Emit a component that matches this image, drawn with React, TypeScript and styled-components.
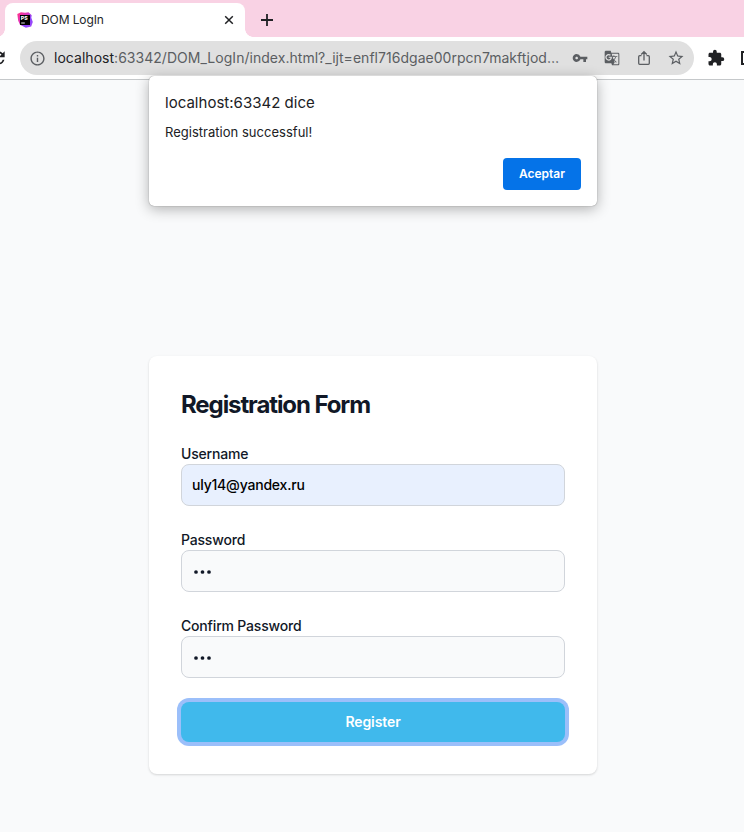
import React from "react";
import styled, { createGlobalStyle } from "styled-components";
import { MdExtension, MdGTranslate, MdInfoOutline, MdRefresh, MdStarBorder, MdVpnKey } from "react-icons/md";

const GlobalStyle = createGlobalStyle`
  * { box-sizing: border-box; }
  body { margin: 0; font-family: Inter, "Liberation Sans", sans-serif; -webkit-font-smoothing: antialiased; }
  button, input { font-family: inherit; }
`;

const Window = styled.div`
  position: relative;
  width: 744px;
  height: 832px;
  display: flex;
  flex-direction: column;
  overflow: hidden;
  background: #f9fafb;
`;

const TabStrip = styled.div`
  flex: none;
  height: 37px;
  padding: 3px 0 0 5px;
  display: flex;
  background: #f9d2e4;
`;

const Tab = styled.div`
  position: relative;
  width: 240px;
  height: 34px;
  padding: 0 10px 0 12px;
  display: flex;
  align-items: center;
  background: #fff;
  border-radius: 8px 8px 0 0;
  &::before, &::after {
    content: "";
    position: absolute;
    bottom: 0;
    width: 8px;
    height: 8px;
  }
  &::before { left: -8px; background: radial-gradient(circle at 0 0, transparent 7.5px, #fff 8px); }
  &::after { right: -8px; background: radial-gradient(circle at 100% 0, transparent 7.5px, #fff 8px); }
`;

const TabTitle = styled.span`
  flex: 1;
  margin-left: 8px;
  font-size: 12px;
  line-height: 16px;
  letter-spacing: -0.1px;
  color: #24262a;
`;

const Glyph = styled.svg`
  display: block;
  flex: none;
  overflow: visible;
`;

const NewTab = styled.div`
  margin-left: 15px;
  display: flex;
  align-items: center;
`;

const Toolbar = styled.div`
  flex: none;
  height: 43px;
  padding-top: 4px;
  display: flex;
  align-items: flex-start;
  background: #fff;
  border-bottom: 1px solid #c5c8ca;
`;

const ToolSlot = styled.div<{ $width: number; $shift?: number }>`
  flex: none;
  width: ${(p) => p.$width}px;
  height: 34px;
  margin-left: ${(p) => p.$shift ?? 0}px;
  display: flex;
  align-items: center;
  justify-content: center;
  color: #202124;
`;

const AddressBar = styled.div`
  flex: none;
  width: 674px;
  height: 34px;
  padding: 0 2px 0 9px;
  display: flex;
  align-items: center;
  border-radius: 17px;
  background: #e0e0e0;
  color: #5b5e62;
`;

const Url = styled.div`
  flex: 1;
  min-width: 0;
  margin-left: 8px;
  white-space: nowrap;
  font-size: 14px;
  line-height: 20px;
  letter-spacing: 0.03px;
  color: #5b5e62;
  b { font-weight: 400; color: #202124; }
`;

const AddressAction = styled.div`
  flex: none;
  width: 32px;
  display: flex;
  justify-content: center;
`;

const Page = styled.main`
  flex: 1;
  padding: 276px 0 0 149px;
`;

const Card = styled.form`
  width: 448px;
  height: 418px;
  padding: 32px;
  display: flex;
  flex-direction: column;
  gap: 24px;
  border-radius: 8px;
  background: #fff;
  box-shadow: 0 1px 3px rgba(0, 0, 0, 0.1), 0 1px 2px rgba(0, 0, 0, 0.06);
`;

const Heading = styled.h1`
  margin: 0;
  font-size: 24px;
  line-height: 33px;
  height: 32px;
  font-weight: 700;
  letter-spacing: -1.1px;
  color: #111827;
`;

const Field = styled.label`
  display: block;
  font-size: 14px;
  line-height: 20px;
  font-weight: 500;
  letter-spacing: -0.18px;
  color: #111827;
`;

const Input = styled.input<{ $filled?: boolean }>`
  display: block;
  width: 100%;
  height: 42px;
  padding: 0 10px 2px;
  border: 1px solid #d1d5db;
  border-radius: 8px;
  outline: none;
  background: ${(p) => (p.$filled ? "#e8f0fe" : "#f9fafb")};
  font-size: 14px;
  font-weight: ${(p) => (p.$filled ? 500 : 400)};
  letter-spacing: -0.2px;
  color: ${(p) => (p.$filled ? "#000" : "#111827")};
`;

const PasswordBox = styled.div`
  height: 42px;
  padding: 2px 0 0 11px;
  display: flex;
  align-items: center;
  border: 1px solid #d1d5db;
  border-radius: 8px;
  background: #f9fafb;
`;

const Register = styled.button`
  height: 40px;
  padding: 0 0 2px;
  border: 0;
  border-radius: 8px;
  background: #40b9ec;
  box-shadow: 0 0 0 4px #9bbffa;
  font-size: 14px;
  font-weight: 600;
  letter-spacing: -0.1px;
  color: #fff;
`;

const Dialog = styled.section`
  position: absolute;
  left: 149px;
  top: 76px;
  width: 448px;
  height: 130px;
  padding: 16px;
  display: flex;
  flex-direction: column;
  border-radius: 5px;
  background: #fff;
  box-shadow: 0 0 1px rgba(0, 0, 0, 0.55), 0 3px 14px rgba(0, 0, 0, 0.3);
`;

const Origin = styled.h2`
  margin: 0;
  font-size: 15px;
  line-height: 22px;
  font-weight: 400;
  letter-spacing: 0.02px;
  color: #202124;
`;

const Message = styled.p`
  margin: 8px 0 0;
  font-size: 13px;
  line-height: 20px;
  letter-spacing: 0.02px;
  color: #202124;
`;

const Accept = styled.button`
  align-self: flex-end;
  margin-top: auto;
  width: 78px;
  height: 32px;
  padding: 0 0 2px;
  border: 0;
  border-radius: 4px;
  background: #0573e8;
  font-size: 12px;
  font-weight: 600;
  color: #fff;
`;

const Favicon = () => (
  <Glyph width="16" height="16" viewBox="0 0 16 16">
    <defs>
      <linearGradient id="ps" x1="0" y1="0.1" x2="1" y2="0.9">
        <stop offset="0" stopColor="#ff318c" />
        <stop offset="0.4" stopColor="#d936bd" />
        <stop offset="0.65" stopColor="#8a45fb" />
        <stop offset="1" stopColor="#a44bfa" />
      </linearGradient>
    </defs>
    <path d="M.3 2 4 .3l4 .5 3.5-.5 3.2 3-.4 2.5 1.5 4.3-1.6 4.5-5.3 1.2L3 12.7l-1.8-4z" fill="url(#ps)" />
    <path d="M3 3h10v10H3z" fill="#000" />
    <path d="M4.2 11h3.6" stroke="#fff" strokeWidth=".9" />
    <text x="3.8" y="7.9" fill="#fff" fontFamily="Inter, sans-serif" fontWeight="800" fontSize="5.3">PS</text>
  </Glyph>
);

const ShareIcon = () => (
  <Glyph width="14" height="16" viewBox="0 0 14 16" fill="none" stroke="currentColor" strokeWidth="1.3">
    <path d="M4.5 5.7H2.7a1 1 0 0 0-1 1v6.6a1 1 0 0 0 1 1h8.6a1 1 0 0 0 1-1V6.7a1 1 0 0 0-1-1H9.5M7 10.5V1.9M4.2 4.5 7 1.7l2.8 2.8" />
  </Glyph>
);

const MaskedValue = () => (
  <Glyph width="20" height="6" viewBox="0 0 20 6" fill="#111827">
    <circle cx="3" cy="3" r="1.85" />
    <circle cx="9.5" cy="3" r="1.85" />
    <circle cx="16" cy="3" r="1.85" />
  </Glyph>
);

export default function App() {
  return (
    <Window>
      <GlobalStyle />
      <TabStrip>
        <Tab>
          <Favicon />
          <TabTitle>DOM LogIn</TabTitle>
          <Glyph width="12" height="12" viewBox="0 0 12 12" stroke="#202124" strokeWidth="1.5">
            <path d="m2.2 2.2 7.6 7.6m0-7.6L2.2 9.8" />
          </Glyph>
        </Tab>
        <NewTab>
          <Glyph width="14" height="14" viewBox="0 0 14 14" stroke="#202124" strokeWidth="1.8">
            <path d="M7 1v12M1 7h12" />
          </Glyph>
        </NewTab>
      </TabStrip>
      <Toolbar>
        <ToolSlot $width={20} $shift={-12}><MdRefresh size={20} /></ToolSlot>
        <ToolSlot $width={12} />
        <AddressBar>
          <MdInfoOutline size={17} />
          <Url><b>localhost</b>:63342/DOM_LogIn/index.html?_ijt=enfl716dgae00rpcn7makftjod…</Url>
          <AddressAction><MdVpnKey size={16} /></AddressAction>
          <AddressAction><MdGTranslate size={16} /></AddressAction>
          <AddressAction><ShareIcon /></AddressAction>
          <AddressAction><MdStarBorder size={18} /></AddressAction>
        </AddressBar>
        <ToolSlot $width={44}><MdExtension size={18} /></ToolSlot>
        <ToolSlot $width={14} $shift={3}>
          <Glyph width="14" height="14" viewBox="0 0 14 14" fill="none" stroke="currentColor" strokeWidth="2">
            <path d="M1 1h12v12H1z" />
          </Glyph>
        </ToolSlot>
      </Toolbar>
      <Page>
        <Card onSubmit={(e) => e.preventDefault()}>
          <Heading>Registration Form</Heading>
          <Field>Username<Input $filled defaultValue="uly14@yandex.ru" /></Field>
          <Field>Password<PasswordBox><MaskedValue /></PasswordBox></Field>
          <Field>Confirm Password<PasswordBox><MaskedValue /></PasswordBox></Field>
          <Register>Register</Register>
        </Card>
      </Page>
      <Dialog>
        <Origin>localhost:63342 dice</Origin>
        <Message>Registration successful!</Message>
        <Accept>Aceptar</Accept>
      </Dialog>
    </Window>
  );
}
